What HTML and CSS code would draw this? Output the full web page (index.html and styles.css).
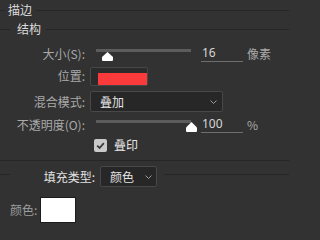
FILE: index.html
```html
<!DOCTYPE html>
<html lang="zh">
<head>
<meta charset="utf-8">
<link rel="stylesheet" href="styles.css">
</head>
<body>
<div class="panel">
  <div class="legend legend-main"><span class="lead lead-5"></span><span class="legend-text">描边</span><span class="rule"></span></div>
  <div class="legend legend-sub"><span class="lead lead-10"></span><span class="legend-text">结构</span><span class="rule"></span></div>

  <div class="row row-size">
    <span class="label">大小(S):</span>
    <div class="slider">
      <span class="track"></span>
      <svg class="thumb thumb-size" width="11" height="9" viewBox="0 0 11 9"><path d="M5.5 0 L11 5 V8 Q11 9 10 9 H1 Q0 9 0 8 V5 Z" fill="#ffffff"/></svg>
    </div>
    <span class="num">16</span>
    <span class="unit">像素</span>
  </div>

  <div class="row row-pos">
    <span class="label">位置:</span>
    <div class="pos-box"><span class="pos-red"></span></div>
  </div>

  <div class="row row-blend">
    <span class="label">混合模式:</span>
    <div class="select select-blend">
      <span class="select-text">叠加</span>
      <svg class="chev" width="7" height="4" viewBox="0 0 7 4"><path d="M0.5 0.5 L3.5 3.5 L6.5 0.5" fill="none" stroke="#9a9a9a" stroke-width="1"/></svg>
    </div>
  </div>

  <div class="row row-opacity">
    <span class="label">不透明度(O):</span>
    <div class="slider">
      <span class="track"></span>
      <svg class="thumb thumb-opacity" width="11" height="10" viewBox="0 0 11 10"><path d="M5.5 0 L11 5.5 V9 Q11 10 10 10 H1 Q0 10 0 9 V5.5 Z" fill="#ffffff"/></svg>
    </div>
    <span class="num">100</span>
    <span class="unit">%</span>
  </div>

  <div class="row row-check">
    <span class="check-spacer"></span>
    <span class="checkbox"><svg width="13" height="13" viewBox="0 0 13 13"><path d="M3.2 6.6 L5.6 9 L9.8 4.2" fill="none" stroke="#3a3a3a" stroke-width="1.8"/></svg></span>
    <span class="check-text">叠印</span>
  </div>

  <div class="separator"></div>

  <div class="row row-fill">
    <span class="lead lead-10 fill-line"></span>
    <span class="fill-label">填充类型:</span>
    <div class="select select-fill">
      <span class="select-text">颜色</span>
      <svg class="chev" width="7" height="4" viewBox="0 0 7 4"><path d="M0.5 0.5 L3.5 3.5 L6.5 0.5" fill="none" stroke="#9a9a9a" stroke-width="1"/></svg>
    </div>
    <span class="rule fill-line"></span>
  </div>

  <div class="row row-color">
    <span class="color-label">颜色:</span>
    <span class="swatch"></span>
  </div>
</div>
</body>
</html>
```

FILE: styles.css
```css
html, body {
  margin: 0;
  padding: 0;
  background: #323232;
}
body {
  width: 289px;
  height: 231px;
  overflow: hidden;
  font-family: "Noto Sans CJK SC", "Noto Sans", sans-serif;
  font-size: 12px;
  color: #a9a9a9;
}
.panel {
  display: flex;
  flex-direction: column;
}
.legend {
  display: flex;
  align-items: center;
  color: #dcdcdc;
  line-height: 18px;
}
.legend-main { height: 20px; }
.legend-sub { height: 18px; }
.lead, .rule {
  height: 1px;
  background: #262626;
}
.lead-5 { width: 5px; }
.lead-10 { width: 10px; }
.rule { flex: 1; }
.legend-text { margin: 0 4px 0 3px; }
.legend-sub .legend-text { margin: 0 5px 0 7px; }

.row {
  display: flex;
  align-items: center;
  line-height: 20px;
}
.label {
  width: 85px;
  text-align: right;
  flex: none;
}
.row-size { height: 20px; margin-top: 6px; }
.slider {
  position: relative;
  width: 95px;
  height: 20px;
  margin-left: 11px;
  flex: none;
}
.track {
  position: absolute;
  left: 0;
  right: 0;
  top: 5px;
  height: 3px;
  background: #5c5c5c;
}
.thumb { position: absolute; }
.thumb-size { left: 6px; top: 8px; }
.thumb-opacity { left: 90px; top: 7px; }
.num {
  width: 41px;
  height: 17px;
  line-height: 17px;
  margin-left: 10px;
  padding-left: 1px;
  border-bottom: 1px solid #6e6e6e;
  color: #d6d6d6;
  font-family: "Noto Sans", sans-serif;
  font-size: 12px;
  align-self: flex-start;
}
.unit {
  margin-left: 4px;
  color: #a9a9a9;
}
.row-size .unit { font-size: 12px; }

.row-pos { height: 20px; margin-top: 2px; }
.pos-box {
  margin-left: 5px;
  width: 56px;
  height: 17px;
  border: 1px solid #474747;
  border-radius: 2px;
  background: #2b2b2b;
  display: flex;
  align-items: flex-start;
}
.pos-red {
  margin-left: 7px;
  margin-top: 5px;
  width: 49px;
  height: 12px;
  background: #fb3a3b;
}

.row-blend { height: 21px; margin-top: 5px; }
.select {
  display: flex;
  align-items: center;
  justify-content: space-between;
  box-sizing: border-box;
  background: #272727;
  border: 1px solid #484848;
  border-radius: 2px;
  color: #e4e4e4;
}
.select-blend {
  margin-left: 5px;
  width: 133px;
  height: 21px;
  padding: 0 5px 0 9px;
}
.chev { flex: none; }

.row-opacity { height: 20px; margin-top: 3px; }

.row-check { height: 14px; margin-top: 3px; }
.check-spacer { width: 94px; flex: none; }
.checkbox {
  width: 13px;
  height: 13px;
  border-radius: 2px;
  background: #cacaca;
  display: flex;
}
.check-text {
  margin-left: 7px;
  color: #e6e6e6;
}

.separator {
  height: 1px;
  background: #262626;
  margin-top: 8px;
}

.row-fill { height: 21px; margin-top: 5px; align-items: center; }
.fill-line { align-self: flex-start; margin-top: 8px; }
.fill-label {
  width: 85px;
  text-align: right;
  color: #e2e2e2;
  flex: none;
}
.select-fill {
  margin-left: 5px;
  width: 57px;
  height: 21px;
  padding: 0 4px 0 9px;
  flex: none;
}
.row-fill .rule { margin-left: 7px; }

.row-color { height: 26px; margin-top: 10px; padding-left: 10px; }
.color-label { color: #9e9e9e; }
.swatch {
  margin-left: 3px;
  width: 34px;
  height: 24px;
  background: #ffffff;
  border: 1px solid #1c1c1c;
}
```
